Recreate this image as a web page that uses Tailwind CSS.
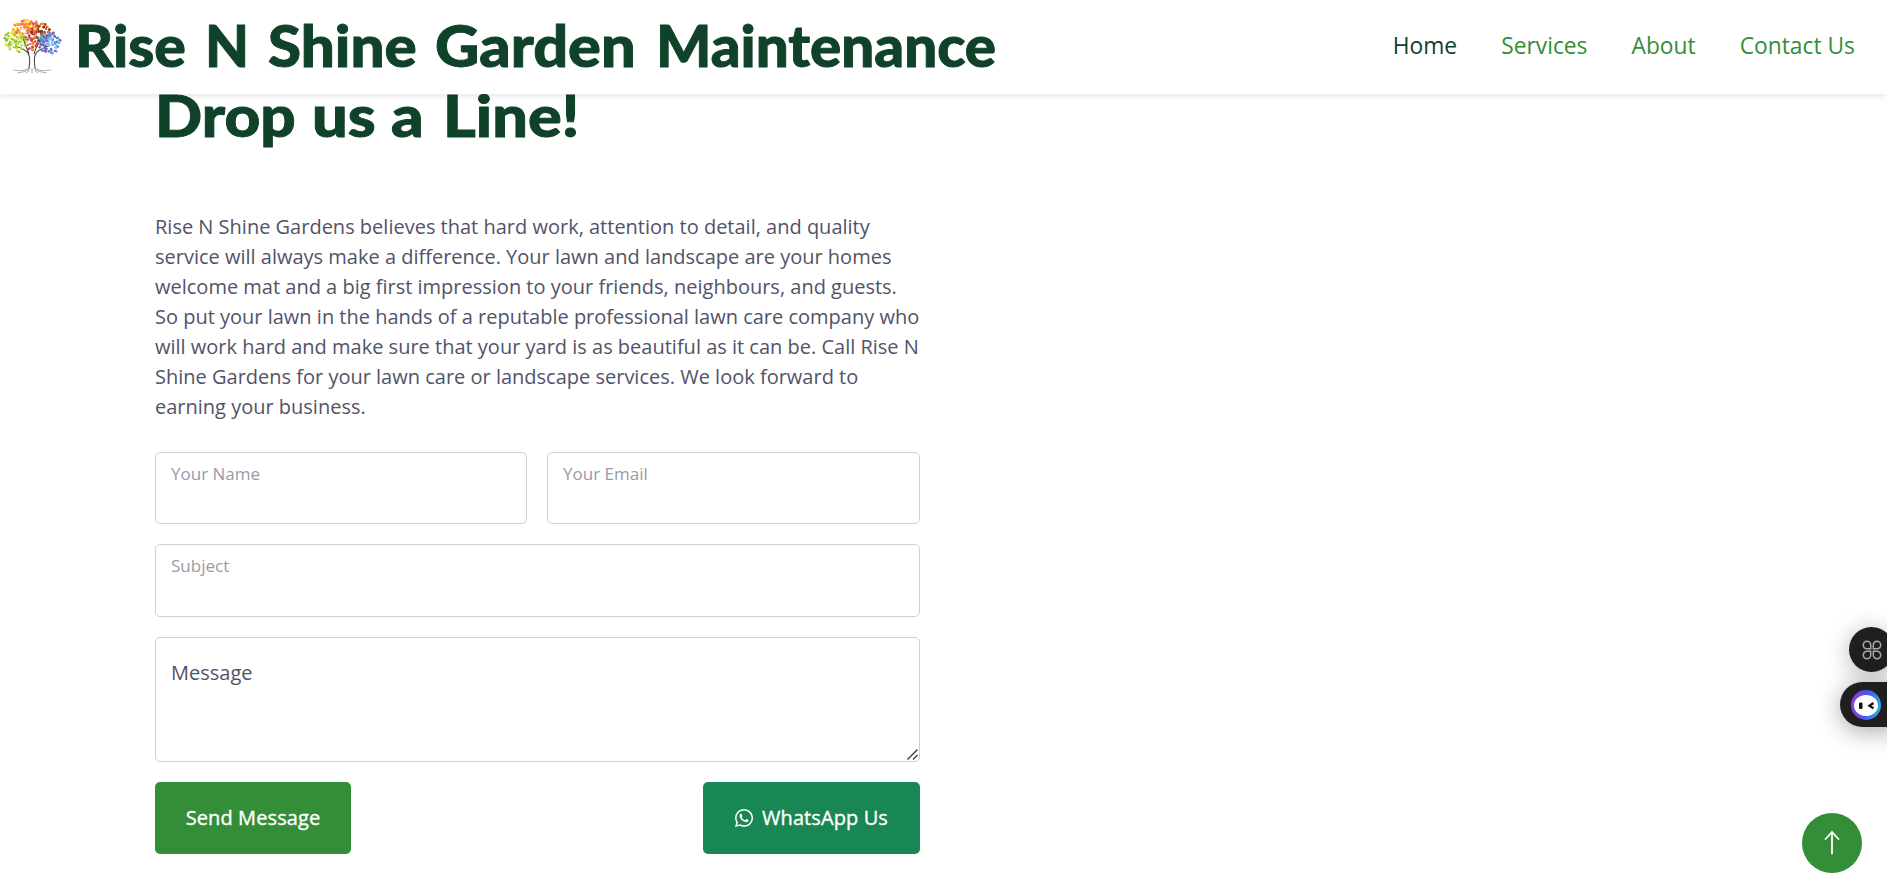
<!DOCTYPE html>
<html lang="en">
<head>
<meta charset="utf-8">
<title>Rise N Shine Garden Maintenance</title>
<script src="https://cdn.jsdelivr.net/npm/@tailwindcss/browser@4"></script>
</head>
<body class="h-screen overflow-hidden bg-white font-['Open_Sans',sans-serif] text-[20px] leading-[30px] text-[#525368]">
<header class="relative z-10 flex h-[94px] items-center justify-between bg-white shadow-[0_2px_6px_rgba(0,0,0,0.10)]">
  <a class="flex items-center pb-[5px]">
    <svg id="tree" class="mt-[-2px] h-[60px] w-[62px] shrink-0" viewBox="0 0 60 60" preserveAspectRatio="none">
      <g fill="none" stroke="#444" stroke-linecap="round">
        <path stroke-width="1" d="M28 54c1.200-6 .8-12-1-15-2-3-6-5-12-7M34 54c-1.200-6-.8-12 1-15 2-3 6-5 12-7M28 40c-2-6-4-11-6-16M33 40c1-6 4-10 7-15"/>
        <path stroke-width=".6" stroke="#777" d="M28 54c-3 3-9 3-15 2M29 54c-3 4-8 4-12 5M31 55v4M34 54c3 3 9 3 15 2M33 54c3 4 8 4 12 5M29 56l-4 3M33 56l4 3"/>
      </g>
      <g id="leaves"></g>
    </svg>
    <h1 class="ml-[13px] flex font-[Lato,sans-serif] text-[57px] leading-[70px] font-black text-[#0f4229] [-webkit-text-stroke:0.900px_#0f4229]">
      <span class="w-[130px] origin-left scale-x-[1.035]">Rise</span><span class="w-[63px]">N</span><span class="w-[167px] origin-left scale-x-[1.055]">Shine</span><span class="w-[221px] origin-left scale-x-[1.075]">Garden</span><span class="origin-left scale-x-[1.022]">Maintenance</span>
    </h1>
  </a>
  <nav class="mr-[32px] flex gap-[44px] pb-[3px] text-[22.800px] font-medium text-[#348e38]">
    <a class="text-[#0f4229]">Home</a><a>Services</a><a>About</a><a>Contact Us</a>
  </nav>
</header>
<main class="ml-[155px] w-[765px]">
  <h2 class="mt-[-15px] flex h-[72px] font-[Lato,sans-serif] text-[58px] leading-[72px] font-black text-[#0f4229] [-webkit-text-stroke:0.900px_#0f4229]">
    <span class="w-[157px] origin-left scale-x-[1.070]">Drop</span><span class="w-[79px] origin-left scale-x-[1.090]">us</span><span class="w-[52px] origin-left scale-x-[1.100]">a</span><span class="origin-left scale-x-[1.085]">Line!</span>
  </h2>
  <p class="mt-[61px] whitespace-nowrap">Rise N Shine Gardens believes that hard work, attention to detail, and quality<br>service will always make a difference. Your lawn and landscape are your homes<br>welcome mat and a big first impression to your friends, neighbours, and guests.<br>So put your lawn in the hands of a reputable professional lawn care company who<br>will work hard and make sure that your yard is as beautiful as it can be. Call Rise N<br>Shine Gardens for your lawn care or landscape services. We look forward to<br>earning your business.</p>
  <form class="mt-[30px] grid grid-cols-[372px_373px] gap-5">
    <div class="h-[72px] rounded-[5px] border border-[#ced0d4] px-[15px] pt-[6px] text-[17px] text-[#9a9aa6]">Your Name</div>
    <div class="h-[72px] rounded-[5px] border border-[#ced0d4] px-[15px] pt-[6px] text-[17px] text-[#9a9aa6]">Your Email</div>
    <div class="col-span-2 h-[73px] rounded-[5px] border border-[#ced0d4] px-[15px] pt-[6px] text-[17px] text-[#9a9aa6]">Subject</div>
    <div class="relative col-span-2 h-[125px]">
      <textarea class="block h-full w-full resize-none rounded-[5px] border border-[#ced0d4] px-[15px] pt-[20px]">Message</textarea>
      <svg class="absolute right-[2px] bottom-[2px] h-[11px] w-[11px]" viewBox="0 0 11 11" fill="none" stroke="#444" stroke-width="1.500"><path d="M.5 10.500L10.500 .5M6 10.500L10.500 6"/></svg>
    </div>
    <div class="col-span-2 flex justify-between font-medium text-white [-webkit-text-stroke:0.350px_white]">
      <button type="button" class="h-[72px] w-[196px] rounded-[5px] bg-[#348e38] tracking-[0.100px]">Send Message</button>
      <button type="button" class="flex h-[72px] w-[217px] items-center justify-center gap-[9px] rounded-[5px] bg-[#198754] tracking-[0.100px]">
        <svg class="h-[18px] w-[18px]" viewBox="0 0 448 448" fill="#fff"><path d="M380.900 65.100C339 23.100 283.200 0 223.900 0 101.500 0 1.900 99.600 1.900 222c0 39.100 10.200 77.300 29.600 111L0 448l117.700-30.900c32.400 17.700 68.900 27 106.100 27h.1c122.300 0 224.100-99.600 224.100-222 0-59.300-25.200-115-67.100-157zm-157 341.600c-33.200 0-65.700-8.900-94-25.700l-6.700-4-69.800 18.300L72 327.200l-4.400-7C49.100 290.800 39.400 256.900 39.400 222c0-101.700 82.800-184.500 184.600-184.500 49.300 0 95.600 19.200 130.400 54.100 34.800 34.900 56.200 81.200 56.100 130.500 0 101.800-84.900 184.600-186.600 184.600zm101.200-138.200c-5.500-2.800-32.800-16.200-37.900-18-5.100-1.900-8.800-2.800-12.500 2.800-3.700 5.600-14.300 18-17.600 21.800-3.200 3.700-6.500 4.200-12 1.400-32.600-16.300-54-29.100-75.500-66-5.700-9.800 5.700-9.100 16.300-30.300 1.800-3.700.9-6.900-.5-9.700-1.400-2.800-12.500-30.100-17.100-41.200-4.500-10.800-9.100-9.300-12.500-9.500-3.200-.2-6.900-.2-10.600-.2-3.700 0-9.700 1.400-14.800 6.900-5.100 5.600-19.400 19-19.400 46.300 0 27.300 19.900 53.700 22.600 57.400 2.800 3.700 39.100 59.700 94.800 83.800 35.200 15.200 49 16.500 66.600 13.900 10.700-1.600 32.800-13.400 37.400-26.400 4.600-13 4.600-24.100 3.200-26.400-1.300-2.500-5-3.900-10.500-6.600z"/></svg>
        <span>WhatsApp Us</span>
      </button>
    </div>
  </form>
</main>

<!-- floating widgets -->
<div class="absolute top-[627px] left-[1849px] z-20 flex h-[45px] w-[45px] items-center rounded-full bg-[#1f1f1f] pl-[12.500px] shadow-[0_4px_24px_rgba(0,0,0,0.3)]">
  <svg class="h-5 w-5" viewBox="0 0 20 20" fill="none" stroke="#aaa" stroke-width="1.500"><path d="M8.700 8.700H5A3.700 3.700 0 1 1 8.700 5zM11.300 8.700V5a3.700 3.700 0 1 1 3.700 3.700zM8.700 11.300V15A3.700 3.700 0 1 1 5 11.300zM11.300 11.300H15a3.700 3.700 0 1 1-3.700 3.700z"/></svg>
</div>
<div class="absolute top-[682px] left-[1840px] z-20 flex h-[45px] w-[70px] items-center rounded-full bg-[#1f1f1f] pl-[11px] shadow-[0_4px_24px_rgba(0,0,0,0.35)]">
  <svg class="h-[30px] w-[30px]" viewBox="0 0 30 30"><defs><linearGradient id="ring" x1="0" y1=".6" x2="1" y2=".8"><stop offset="0" stop-color="#8a3fe0"/><stop offset=".45" stop-color="#4a55ee"/><stop offset="1" stop-color="#28b5e8"/></linearGradient></defs><circle cx="15" cy="15" r="15" fill="url(#ring)"/><ellipse cx="15" cy="15.500" rx="12" ry="10.500" fill="#fff"/><rect x="8" y="12.500" width="3.500" height="6.500" rx="1.200" fill="#111"/><path d="M22.500 13l-4 2.700 4 2.700" fill="none" stroke="#111" stroke-width="2.300"/></svg>
</div>
<a class="absolute top-[813px] left-[1802px] z-20 flex h-[60px] w-[60px] items-center justify-center rounded-full bg-[#348e38]">
  <svg class="mr-[1px] h-6 w-4" viewBox="0 0 16 24" fill="none" stroke="#fff" stroke-width="1.800" stroke-linecap="round" stroke-linejoin="round"><path d="M8 22.500V1M1.500 8L8 1l6.500 7"/></svg>
</a>
<script>
// Scatter the leaves of the logo tree with a fixed seed
let s = 7;
const r = () => (s = (s * 16807) % 2147483647) / 2147483647;
const sets = [
  [14, 28, 12, 11, 80, ['#a6cf2e', '#c5e05a', '#8fc31f', '#dbe86b']],
  [25, 15, 13, 9, 80, ['#f7a823', '#ef4a8a', '#ffc83d', '#f58220']],
  [39, 19, 11, 12, 80, ['#a8431c', '#d9652a', '#7d3018', '#f28a3c']],
  [48, 29, 11, 11, 80, ['#4b8fd6', '#8fc4ee', '#7a5cc0', '#5aa9e6']],
  [30, 30, 6, 7, 22, ['#ef4a8a', '#f58220', '#b04a20']]
];
let out = '';
for (const [cx, cy, rx, ry, n, cols] of sets)
  for (let i = 0; i < n; i++) {
    const a = r() * 6.283, d = Math.sqrt(r());
    out += `<circle cx="${(cx + rx * d * Math.cos(a)).toFixed(1)}" cy="${(cy + ry * d * Math.sin(a)).toFixed(1)}" r="${(0.9 + r() * 0.6).toFixed(1)}" fill="${cols[Math.floor(r() * cols.length)]}"/>`;
  }
document.getElementById('leaves').innerHTML = out;
</script>
</body>
</html>
